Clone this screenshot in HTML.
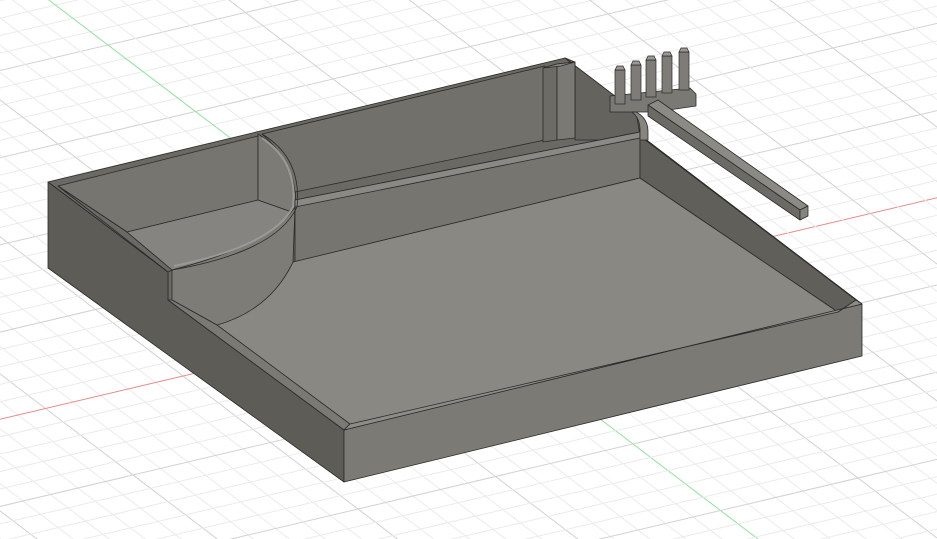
<!DOCTYPE html>
<html><head><meta charset="utf-8"><style>
html,body{margin:0;padding:0;background:#fff;width:937px;height:539px;overflow:hidden}
svg{display:block;overflow:hidden}
</style></head><body>
<svg id="s" width="937" height="539" viewBox="0 0 937 539" xmlns="http://www.w3.org/2000/svg">
<g id="grid"></g>
<g stroke="#2a2a28" stroke-width="0.8" stroke-linejoin="round">
<!-- interior base -->
<polygon points="48,182 565,58 640,118 640,135 862,304 344,430 168,300 168,272" fill="#6a6963"/>
<!-- outer faces -->
<polygon points="48,182 168,272 168,300 344,430 344,482 48,268" fill="#5d5c57"/>
<polygon points="344,430 862,304 862,356 344,482" fill="#7b7a74"/>
<!-- left compartment back wall -->
<polygon points="58,186 258,136 258,200 127,232" fill="#76756f"/>
<!-- left inner wall of left compartment -->
<polygon points="58,186 127,232 172,270 168,272" fill="#6a6963"/>
<!-- left compartment floor -->
<path d="M127,232 L258,200 L292,212 Q270,245 172,270 Z" fill="#858480"/>
<!-- inner curved face -->
<path d="M258,134 Q300,160 295,207 L292,212 L258,200 Z" fill="#7c7b75"/>
<!-- back wall behind ledge -->
<path d="M262,134 L545,66 L545,140 L295,192 Q292,160 262,134 Z" fill="#71706a"/>
<!-- back right wall -->
<polygon points="575,62 565,58 636,112 640,135 640,140 575,140" fill="#64635d"/>
<!-- column -->
<polygon points="543,68 557,64 557,140 543,142" fill="#6c6b66"/>
<polygon points="557,64 575,62 575,138 557,140" fill="#7a7974"/>
<polygon points="543,68 557,64 575,62 561,66" fill="#8a8985"/>
<!-- ledge + middle back wall -->
<polygon points="295,200 640,132 640,178 295,262" fill="#767570"/>
<polygon points="295,200 640,132 640,138 295,207" fill="#8a8984"/>
<!-- main floor -->
<path d="M293,262 L640,178 L838,312 L350,424 L217,325 Q270,310 293,262 Z" fill="#898882" stroke="none"/>
<path d="M217,325 Q270,310 293,262 L640,178 L838,312" fill="none"/>
<!-- right inner wall -->
<polygon points="640,136 856,300 838,312 640,178" fill="#615f59"/>
<!-- curved wall -->
<path d="M295,207 L293,262 Q270,310 217,325 L172,300 L172,270 Q270,245 295,207 Z" fill="#7d7c76"/>
<path d="M262,134 Q302,158 297,207 Q276,252 172,270" fill="none" stroke="#2a2a28"/>
<path d="M262,138 Q298,162 293,207 Q272,246 174,266" fill="none" stroke="#9a9994" stroke-width="2"/>
<!-- lips -->
<polygon points="168,300 172,300 217,325 350,424 344,430" fill="#7a7973"/>
<polygon points="344,430 350,424 838,312 856,300 862,304" fill="#8d8c87"/>
<!-- pins base & arm -->
<polygon points="610,96 690,88 696,94 696,106 655,112 610,112" fill="#7a7974"/>
<polygon points="648,105 658,100 808,206 800,210" fill="#8b8a85"/>
<polygon points="648,105 800,210 800,220 648,116" fill="#6b6a65"/>
<polygon points="800,210 808,206 808,216 800,220" fill="#84837e"/>
<path d="M636,112 Q648,118 648,132 L648,140 L640,140 L640,130 Q640,118 632,112 Z" fill="#86857f"/>
</g>
<g id="pins" stroke="#2a2a28" stroke-width="0.7"></g>
</svg>
<script>
(function(){
var NS="http://www.w3.org/2000/svg",g=document.getElementById('grid');
function L(x1,y1,x2,y2,c,w){var l=document.createElementNS(NS,'line');l.setAttribute('x1',x1);l.setAttribute('y1',y1);l.setAttribute('x2',x2);l.setAttribute('y2',y2);l.setAttribute('stroke',c);l.setAttribute('stroke-width',w);g.appendChild(l);}
var ox=458,oy=311,u=[27.5,-6.5],v=[17.5,13.3];
for(var k=-60;k<=60;k++){
 var px=ox+k*v[0],py=oy+k*v[1];
 var c=k==0?'#e88a8a':(k%5==0?'#d2d2d2':'#ebebeb');
 L(px-u[0]*60,py-u[1]*60,px+u[0]*60,py+u[1]*60,c,1);
 var qx=ox+k*u[0],qy=oy+k*u[1];
 c=k==0?'#8fe3a0':(k%5==0?'#d2d2d2':'#ebebeb');
 L(qx-v[0]*60,qy-v[1]*60,qx+v[0]*60,qy+v[1]*60,c,1);
}
var p=document.getElementById('pins');
var xs=[620,636,651,667,684],ts=[66,61,56,52,48],bs=[104,100,97,93,90];
for(var i=0;i<5;i++){
 var r=document.createElementNS(NS,'rect');r.setAttribute('x',xs[i]-5);r.setAttribute('y',ts[i]+4);r.setAttribute('width',10);r.setAttribute('height',bs[i]-ts[i]-4);r.setAttribute('fill','#7d7c77');p.appendChild(r);
 var e=document.createElementNS(NS,'path');e.setAttribute('d','M'+(xs[i]-5)+','+(ts[i]+4)+' L'+(xs[i]-3)+','+ts[i]+' L'+(xs[i]+3)+','+ts[i]+' L'+(xs[i]+5)+','+(ts[i]+4)+' Z');e.setAttribute('fill','#9a9994');p.appendChild(e);
}
})();
</script>
</body></html>
